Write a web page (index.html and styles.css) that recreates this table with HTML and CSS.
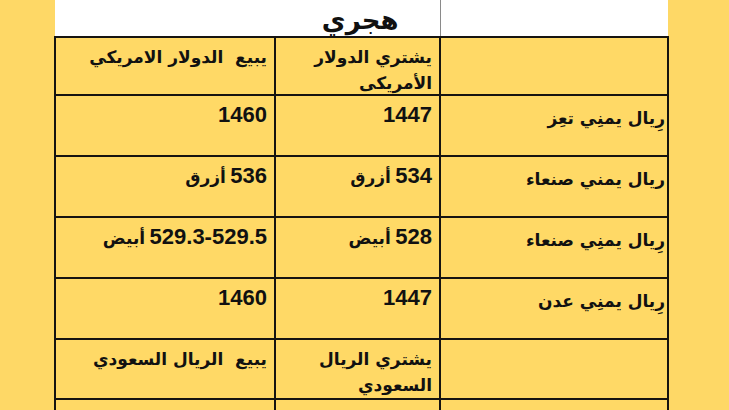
FILE: index.html
```html
<!DOCTYPE html>
<html lang="ar" dir="rtl">
<head>
<meta charset="utf-8">
<link rel="stylesheet" href="styles.css">
</head>
<body>
<div class="page">
<table class="rates">
  <colgroup>
    <col class="c-name">
    <col class="c-buy">
    <col class="c-sell">
  </colgroup>
  <tr class="top">
    <td class="top-name"></td>
    <td class="top-title"><span class="title">هجري</span></td>
    <td class="top-empty"></td>
  </tr>
  <tr class="head">
    <td class="name"></td>
    <td class="val"><span class="ar hd">يشتري الدولار الأمريكى</span></td>
    <td class="val"><span class="ar hd">يبيع&nbsp; الدولار الامريكي</span></td>
  </tr>
  <tr class="row">
    <td class="name"><span class="ar">رِيال يمنِي تعِز</span></td>
    <td class="val"><span class="num">1447</span></td>
    <td class="val"><span class="num">1460</span></td>
  </tr>
  <tr class="row">
    <td class="name"><span class="ar">ريال يمني صنعاء</span></td>
    <td class="val"><span class="num">534</span> <span class="ar">أزرق</span></td>
    <td class="val"><span class="num">536</span> <span class="ar">أزرق</span></td>
  </tr>
  <tr class="row">
    <td class="name"><span class="ar">رِيال يمنِي صنعاء</span></td>
    <td class="val"><span class="num">528</span> <span class="ar">أبيض</span></td>
    <td class="val"><span class="num">529.3-529.5</span> <span class="ar">أبيض</span></td>
  </tr>
  <tr class="row">
    <td class="name"><span class="ar">رِيال يمنِي عدن</span></td>
    <td class="val"><span class="num">1447</span></td>
    <td class="val"><span class="num">1460</span></td>
  </tr>
  <tr class="head2">
    <td class="name"></td>
    <td class="val"><span class="ar hd">يشتري الريال السعودي</span></td>
    <td class="val"><span class="ar hd">يبيع&nbsp; الريال السعودي</span></td>
  </tr>
  <tr class="row">
    <td class="name"><span class="ar">ريال سعودي تعز</span></td>
    <td class="val"><span class="num">380</span></td>
    <td class="val"><span class="num">384</span></td>
  </tr>
</table>
</div>
</body>
</html>
```

FILE: styles.css
```css
html, body {
  margin: 0;
  padding: 0;
  background: #fed866;
  overflow: hidden;
}
body {
  width: 729px;
  height: 410px;
  font-family: "Liberation Sans", "DejaVu Sans", sans-serif;
  font-weight: bold;
  color: #111;
}
.page {
  padding-left: 54px;
  direction: ltr;
}
.rates {
  direction: rtl;
  border-collapse: collapse;
  table-layout: fixed;
  width: 613px;
}
.c-name { width: 228px; }
.c-buy { width: 165px; }
.c-sell { width: 220px; }
.rates td {
  vertical-align: top;
  text-align: right;
  background: #ffd966;
  border: 2px solid #161410;
  padding: 0;
  overflow: visible;
}
.rates tr.top { height: 37px; }
.rates tr.top td {
  background: #ffffff;
  border: none;
}
.rates tr.top td.top-name {
  border-left: 1px solid #8a8a8a;
}
.rates td.top-title {
  text-align: center;
  white-space: nowrap;
}
.title {
  display: inline-block;
  font-family: "DejaVu Sans", sans-serif;
  font-size: 26px;
  line-height: 28px;
  padding-top: 6px;
  margin-left: 6px;
}
.rates tr.head { height: 58px; }
.rates tr.head2 { height: 60px; }
.rates tr.row { height: 61px; }
.val { padding: 6px 7px 0 0 !important; }
.name { padding: 9px 2px 0 0 !important; }
.head .val, .head2 .val { padding-top: 6px !important; }
.num {
  font-family: "Liberation Sans", sans-serif;
  font-size: 22px;
  line-height: 26px;
}
.ar {
  font-family: "DejaVu Sans", sans-serif;
  font-size: 17px;
  line-height: 26px;
}
.hd {
  display: block;
  height: 46px;
}
```
